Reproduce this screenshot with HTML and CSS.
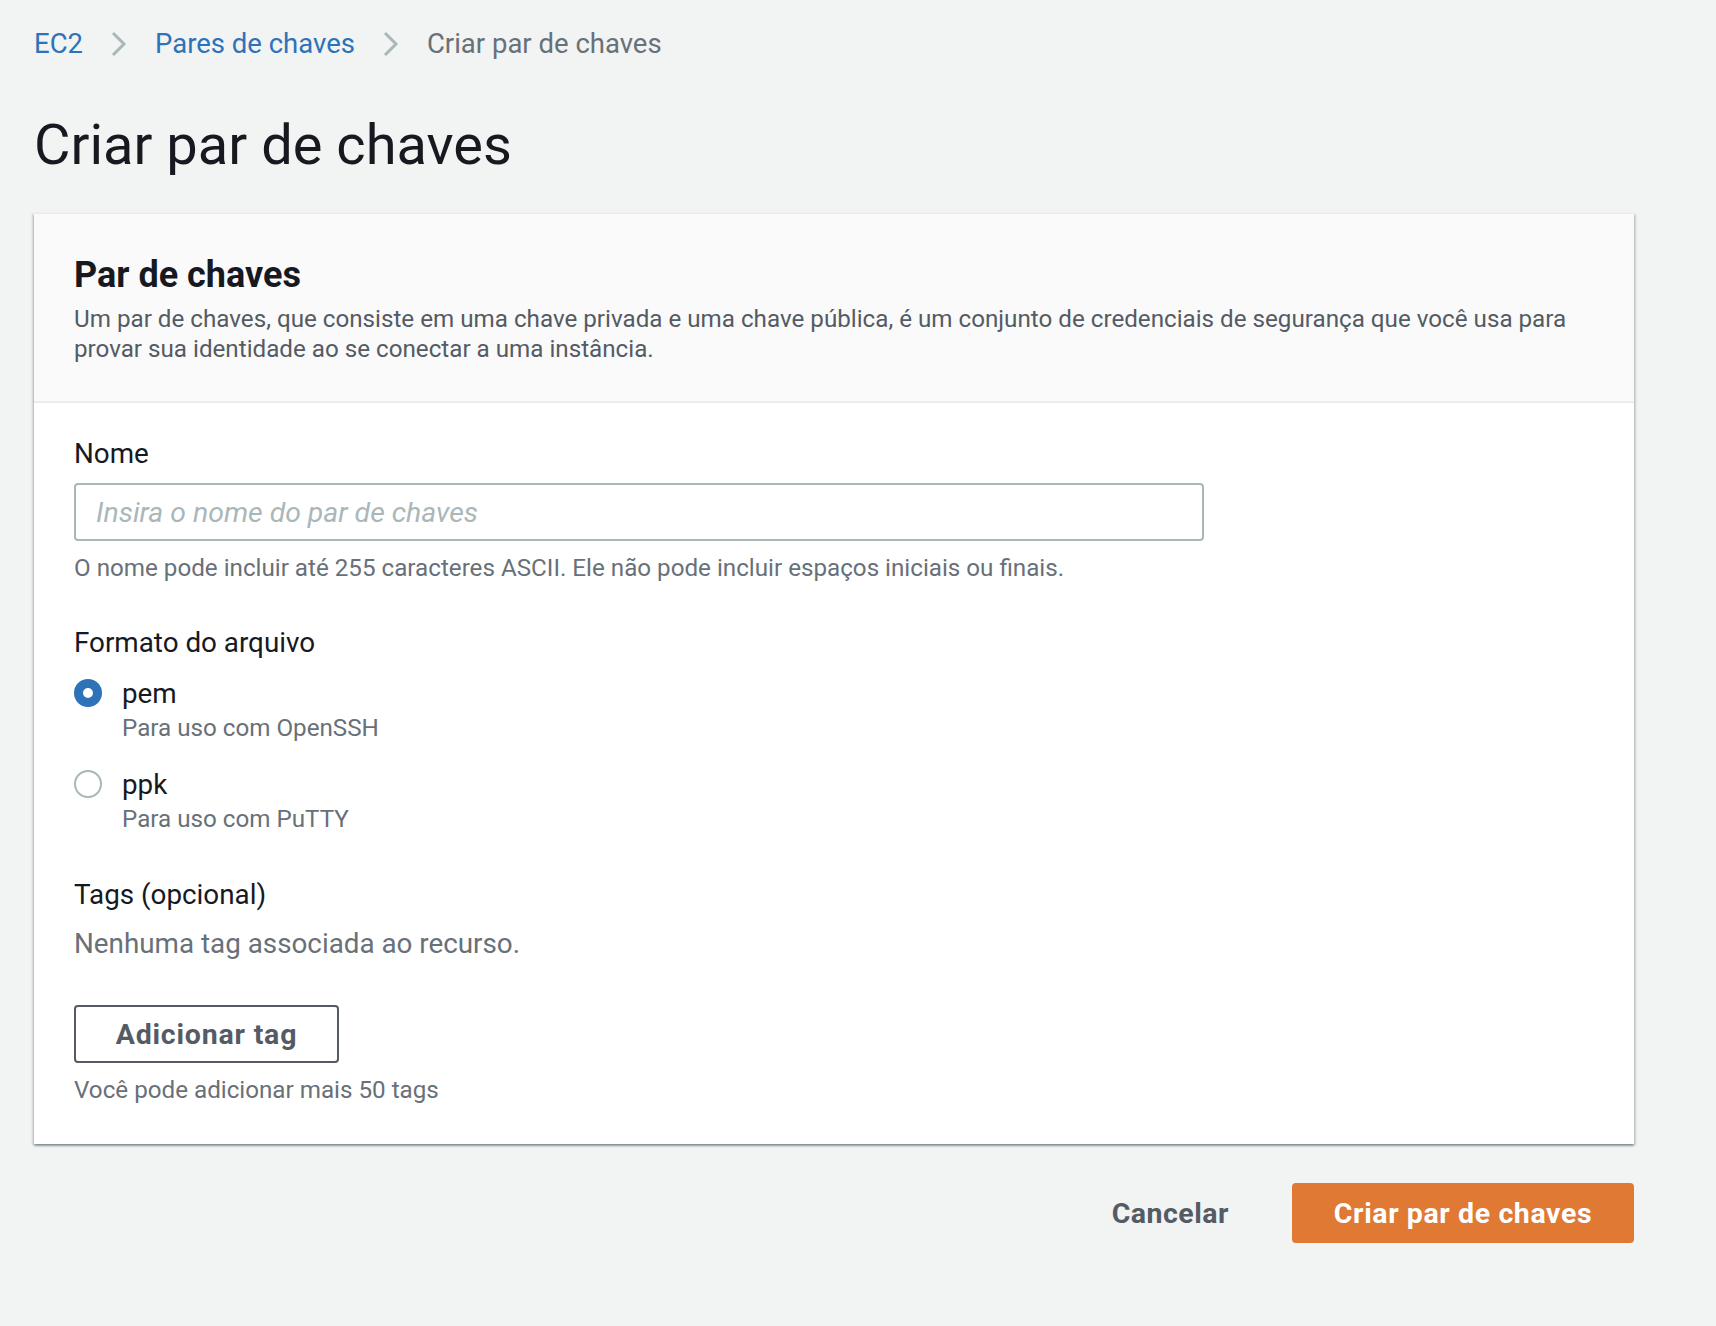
FILE: index.html
```html
<!DOCTYPE html>
<html lang="pt-BR">
<head>
<meta charset="utf-8">
<title>Criar par de chaves</title>
<link rel="stylesheet" href="styles.css">
</head>
<body>
<div class="page">
  <nav class="crumbs">
    <a class="crumb-link" href="#">EC2</a>
    <svg class="chev" width="16" height="26" viewBox="0 0 16 26"><path d="M2 2 L13 13 L2 24" fill="none" stroke="#aab7b8" stroke-width="3"/></svg>
    <a class="crumb-link" href="#">Pares de chaves</a>
    <svg class="chev" width="16" height="26" viewBox="0 0 16 26"><path d="M2 2 L13 13 L2 24" fill="none" stroke="#aab7b8" stroke-width="3"/></svg>
    <span class="crumb-current">Criar par de chaves</span>
  </nav>

  <h1 class="title">Criar par de chaves</h1>

  <section class="panel">
    <header class="panel-head">
      <h2 class="panel-title">Par de chaves</h2>
      <p class="panel-desc">Um par de chaves, que consiste em uma chave privada e uma chave pública, é um conjunto de credenciais de segurança que você usa para provar sua identidade ao se conectar a uma instância.</p>
    </header>
    <div class="panel-body">
      <div class="field">
        <label class="label" for="nome">Nome</label>
        <input class="text-input" id="nome" type="text" placeholder="Insira o nome do par de chaves">
        <p class="hint hint-input">O nome pode incluir até 255 caracteres ASCII. Ele não pode incluir espaços iniciais ou finais.</p>
      </div>

      <div class="field field-format">
        <div class="label">Formato do arquivo</div>
        <div class="radios">
          <div class="radio-item">
            <span class="radio radio-on"></span>
            <div class="radio-text">
              <div class="radio-title">pem</div>
              <div class="radio-desc">Para uso com OpenSSH</div>
            </div>
          </div>
          <div class="radio-item radio-item-2">
            <span class="radio"></span>
            <div class="radio-text">
              <div class="radio-title">ppk</div>
              <div class="radio-desc">Para uso com PuTTY</div>
            </div>
          </div>
        </div>
      </div>

      <div class="field field-tags">
        <div class="label">Tags (opcional)</div>
        <p class="empty">Nenhuma tag associada ao recurso.</p>
        <button class="btn-normal" type="button">Adicionar tag</button>
        <p class="hint hint-tags">Você pode adicionar mais 50 tags</p>
      </div>
    </div>
  </section>

  <div class="actions">
    <button class="btn-link" type="button">Cancelar</button>
    <button class="btn-primary" type="button">Criar par de chaves</button>
  </div>
</div>
</body>
</html>
```

FILE: styles.css
```css
* { box-sizing: border-box; }

html, body {
  margin: 0;
  padding: 0;
  background: #f2f3f3;
}

body {
  font-family: Roboto, "Liberation Sans", Arial, sans-serif;
  color: #16191f;
}

.page {
  padding: 26px 82px 40px 34px;
}

/* Breadcrumbs */
.crumbs {
  display: flex;
  align-items: center;
  height: 36px;
  font-size: 27.5px;
  line-height: 36px;
}

.crumb-link {
  color: #2e72b8;
  text-decoration: none;
}

.crumb-current {
  color: #687078;
}

.chev {
  display: block;
  margin: 0 28px;
  flex: none;
}

/* Title */
.title {
  margin: 51px 0 36px 0;
  font-size: 56px;
  line-height: 64px;
  font-weight: 400;
  color: #16191f;
}

/* Panel */
.panel {
  background: #ffffff;
  border-top: 1px solid #e9ebeb;
  box-shadow: 0 2px 2px 0 rgba(0, 28, 36, 0.35), 2px 1px 2px 0 rgba(0, 28, 36, 0.12), -2px 1px 2px 0 rgba(0, 28, 36, 0.12);
}

.panel-head {
  background: #fafafa;
  border-bottom: 2px solid #eaeded;
  padding: 39px 40px 37px 40px;
}

.panel-title {
  margin: 0;
  font-size: 36px;
  line-height: 44px;
  font-weight: 700;
  color: #16191f;
}

.panel-desc {
  margin: 7px 0 0 0;
  font-size: 24.2px;
  line-height: 30px;
  color: #545b64;
}

.panel-body {
  padding: 33px 40px 38px 40px;
}

.label {
  display: block;
  font-size: 27.8px;
  line-height: 36px;
  color: #16191f;
}

.text-input {
  display: block;
  margin-top: 11px;
  width: 1130px;
  height: 58px;
  padding: 0 20px;
  border: 2px solid #aab7b8;
  border-radius: 4px;
  background: #ffffff;
  font-family: Roboto, "Liberation Sans", Arial, sans-serif;
  font-size: 28.4px;
  color: #16191f;
  outline: none;
}

.text-input::placeholder {
  color: #aab7b8;
  font-style: italic;
}

.hint {
  margin: 0;
  font-size: 24.2px;
  line-height: 32px;
  color: #687078;
}

.hint-input {
  margin-top: 11px;
}

.field-format {
  margin-top: 41px;
}

.radios {
  margin-top: 15px;
  display: flex;
  flex-direction: column;
}

.radio-item {
  display: flex;
  align-items: flex-start;
}

.radio-item-2 {
  margin-top: 22px;
}

.radio {
  flex: none;
  width: 28px;
  height: 28px;
  margin-top: 3px;
  border-radius: 50%;
  border: 2px solid #aab7b8;
  background: #ffffff;
}

.radio-on {
  border: 9px solid #2e72b8;
}

.radio-text {
  margin-left: 20px;
}

.radio-title {
  font-size: 27.8px;
  line-height: 36px;
  color: #16191f;
}

.radio-desc {
  font-size: 24.2px;
  line-height: 33px;
  color: #687078;
}

.field-tags {
  margin-top: 41px;
}

.empty {
  margin: 13px 0 0 0;
  font-size: 27.8px;
  line-height: 36px;
  color: #687078;
}

.btn-normal {
  display: block;
  margin-top: 43px;
  height: 58px;
  width: 265px;
  padding: 0;
  border: 2px solid #545b64;
  border-radius: 4px;
  background: #ffffff;
  font-family: Roboto, "Liberation Sans", Arial, sans-serif;
  font-size: 28.5px;
  font-weight: 700;
  letter-spacing: 0.8px;
  color: #545b64;
}

.hint-tags {
  margin-top: 11px;
}

/* Actions */
.actions {
  display: flex;
  justify-content: flex-end;
  align-items: center;
  margin-top: 39px;
}

.btn-link {
  border: none;
  background: none;
  padding: 0;
  margin-right: 63px;
  font-family: Roboto, "Liberation Sans", Arial, sans-serif;
  font-size: 28.5px;
  font-weight: 700;
  letter-spacing: 0.5px;
  color: #545b64;
}

.btn-primary {
  width: 342px;
  height: 60px;
  border: none;
  border-radius: 4px;
  background: #df7934;
  padding: 0;
  font-family: Roboto, "Liberation Sans", Arial, sans-serif;
  font-size: 28.5px;
  font-weight: 700;
  letter-spacing: 0.6px;
  color: #ffffff;
}
```
